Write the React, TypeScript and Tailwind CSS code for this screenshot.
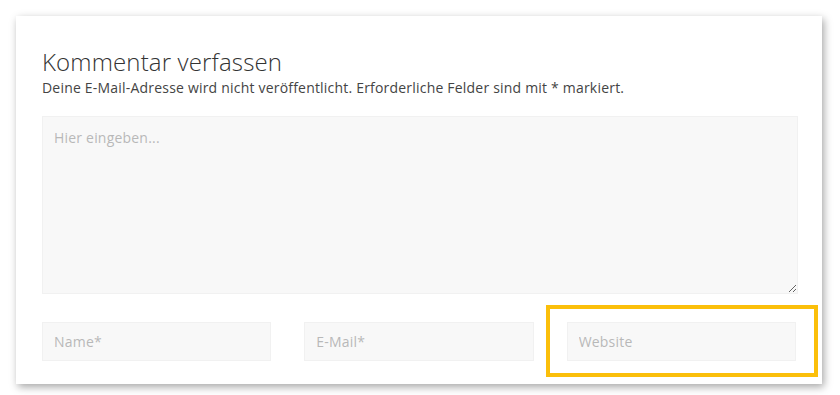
export default function App() {
    return (
        <div className="h-[395px] w-[840px] bg-white pl-4 pt-4" style={{ fontFamily: '"Open Sans", sans-serif' }}>
            <div className="relative w-[806px] h-[368px] bg-white shadow-[2px_3px_8px_rgba(0,0,0,0.35)] px-[26px] pt-[29px]">
                <h3 className="text-[24px] leading-[33px] font-light tracking-[0.15px] text-[#333]">
                    Kommentar verfassen
                </h3>
                <p className="text-[14px] leading-[20px] tracking-[0.2px] text-[#444]">
                    Deine E-Mail-Adresse wird nicht veröffentlicht. Erforderliche Felder sind mit * markiert.
                </p>

                <textarea
                    placeholder="Hier eingeben..."
                    className="mt-[18px] block w-[756px] h-[178px] resize-y bg-[#f8f8f8] border border-[#f1f1f1] px-[11px] py-[10px] text-[14px] tracking-[0.2px] placeholder:text-[#b8b8b8] outline-none"
                />

                <div className="mt-[28px] flex gap-[33px]">
                    <input
                        placeholder="Name*"
                        className="w-[230px] h-[39px] bg-[#f8f8f8] border border-[#f1f1f1] px-[11px] text-[14px] tracking-[0.2px] placeholder:text-[#b8b8b8] outline-none"
                    />
                    <input
                        placeholder="E-Mail*"
                        className="w-[230px] h-[39px] bg-[#f8f8f8] border border-[#f1f1f1] px-[11px] text-[14px] tracking-[0.2px] placeholder:text-[#b8b8b8] outline-none"
                    />
                    <input
                        placeholder="Website"
                        className="w-[230px] h-[39px] bg-[#f8f8f8] border border-[#f1f1f1] px-[11px] text-[14px] tracking-[0.2px] placeholder:text-[#b8b8b8] outline-none"
                    />
                </div>

                {/* highlight */}
                <div className="absolute left-[530px] top-[289px] w-[272px] h-[72px] border-4 border-[#fbbf0a]" />
            </div>
        </div>
    );
}
